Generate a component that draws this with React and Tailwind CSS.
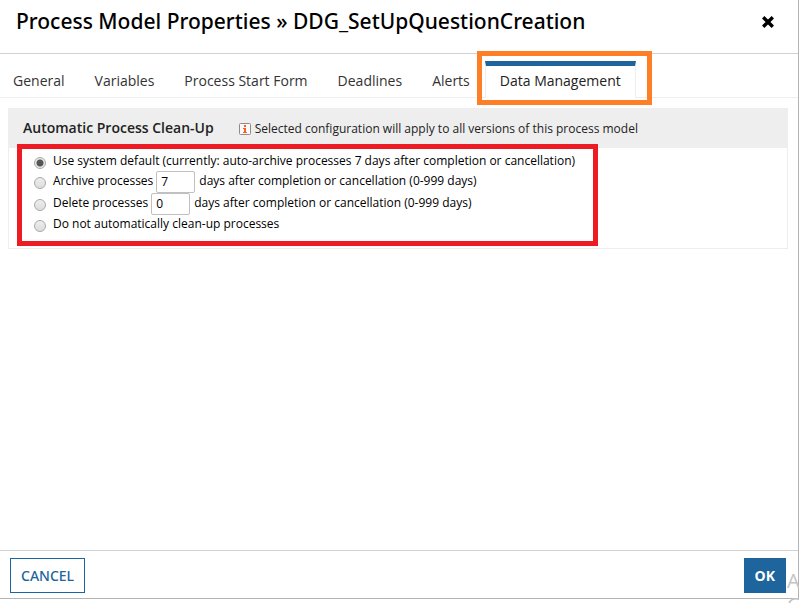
import React, { useState } from 'react';

const TABS = ['General', 'Variables', 'Process Start Form', 'Deadlines', 'Alerts', 'Data Management'];

const RADIO =
  'appearance-none size-3 shrink-0 mt-1 mr-[7px] rounded-full border border-[#a9a9a9] bg-linear-to-b from-[#eeeeee] to-[#dcdcdc] ' +
  'checked:bg-[radial-gradient(circle,#555_3px,#e8e8e8_4px)]';

function CloseIcon() {
  return (
    <svg viewBox="0 0 12 12" className="size-3" aria-hidden="true">
      <path d="M1.2 1.2 10.8 10.8M10.8 1.2 1.2 10.8" stroke="#000" strokeWidth="3.4" />
    </svg>
  );
}

function InfoIcon() {
  return (
    <svg viewBox="0 0 12 12" className="size-3 mr-1 shrink-0" aria-hidden="true">
      <rect x="0.5" y="0.5" width="11" height="11" rx="1" fill="#f8f8f8" stroke="#8c8c8c" />
      <rect x="5" y="2" width="2" height="2" fill="#ff5a22" />
      <path d="M4 5h3v4h1v1H4V9h1V6H4z" fill="#ff5a22" />
    </svg>
  );
}

function DaysOption({ id, label, mode, setMode, initial }) {
  const [days, setDays] = useState(initial);
  return (
    <div className="flex items-center h-[22px]">
      <input type="radio" name="cleanup" id={id} checked={mode === id} onChange={() => setMode(id)} className={RADIO} />
      <label htmlFor={id}>{label}</label>
      <input
        type="text"
        aria-label={`${label} after days`}
        value={days}
        onChange={(e) => setDays(e.target.value)}
        className="w-[39px] h-[22px] mt-px ml-[3px] mr-1 px-1 border border-[#c0c0c0] rounded-xs bg-white"
      />
      <span>days after completion or cancellation (0-999 days)</span>
    </div>
  );
}

function PlainOption({ id, label, mode, setMode }) {
  return (
    <div className="flex items-center h-[19px]">
      <input type="radio" name="cleanup" id={id} checked={mode === id} onChange={() => setMode(id)} className={RADIO} />
      <label htmlFor={id}>{label}</label>
    </div>
  );
}

export default function App() {
  const [tab, setTab] = useState('Data Management');
  const [mode, setMode] = useState('default');

  return (
    <div className="relative h-screen pb-1 overflow-hidden bg-white font-['Open_Sans',sans-serif] text-black">
      <div role="dialog" aria-labelledby="dialog-title" className="flex flex-col h-full bg-white border-r border-b border-[#b4b4b4]">
        <header className="flex items-center justify-between h-[54px] pl-4 pr-6 pb-2.5 border-b border-[#d2d2d2]">
          <h1 id="dialog-title" className="font-['Noto_Sans','Open_Sans',sans-serif] text-[21px] font-medium whitespace-nowrap">
            Process Model Properties » DDG_SetUpQuestionCreation
          </h1>
          <button type="button" aria-label="Close">
            <CloseIcon />
          </button>
        </header>

        <nav role="tablist" className="flex h-11 pt-[7px] -ml-0.5 border-b border-[#eeeeee]">
          {TABS.map((name) => (
            <div key={name} className="relative flex">
              <button
                type="button"
                role="tab"
                aria-selected={tab === name}
                onClick={() => setTab(name)}
                className={
                  tab === name
                    ? 'relative -mb-px px-3.5 bg-white border-x border-x-[#eeeeee] border-t-[5px] border-t-[#1d659c] pb-[3px] text-sm text-[#222] whitespace-nowrap'
                    : 'px-[15px] pb-[2px] pt-[5px] text-sm text-[#333] whitespace-nowrap'
                }
              >
                {name}
              </button>
              {name === 'Data Management' && (
                <div className="absolute z-10 -top-2.5 -bottom-2 -left-2 -right-4 border-[5px] border-[#ff7f27] pointer-events-none" />
              )}
            </div>
          ))}
        </nav>

        <main className="flex-1 pt-2.5 pl-2 pr-2.5">
          <section className="border border-[#eeeeee]">
            <div className="flex items-center h-[39px] pl-3.5 bg-[#eeeeee] text-[#222]">
              <h2 className="text-sm font-semibold mr-[25px] pb-px">Automatic Process Clean-Up</h2>
              <InfoIcon />
              <p className="text-xs">Selected configuration will apply to all versions of this process model</p>
            </div>
            <div className="relative h-[100px] pt-[3px] pl-[25px] text-xs">
              <PlainOption id="default" label="Use system default (currently: auto-archive processes 7 days after completion or cancellation)" mode={mode} setMode={setMode} />
              <DaysOption id="archive" label="Archive processes" initial="7" mode={mode} setMode={setMode} />
              <DaysOption id="delete" label="Delete processes" initial="0" mode={mode} setMode={setMode} />
              <PlainOption id="none" label="Do not automatically clean-up processes" mode={mode} setMode={setMode} />
              <div className="absolute -top-1 left-2 w-[581px] h-[102px] border-[5px] border-[#ed1c24] pointer-events-none" />
            </div>
          </section>
        </main>

        <footer className="flex items-center justify-between h-12 pl-2.5 pr-3 pt-px border-t border-[#d2d2d2] text-sm">
          <button type="button" className="h-[35px] px-2.5 pt-0.5 border border-[#1d659c] text-[#1d659c] font-['Noto_Sans','Open_Sans',sans-serif] font-medium">
            CANCEL
          </button>
          <button type="button" className="h-[35px] px-[11px] pt-0.5 bg-[#1d659c] text-white font-bold">
            OK
          </button>
        </footer>
      </div>

      <div className="absolute left-[787px] top-[569px] text-xl leading-6 text-[#c4c4c4] whitespace-nowrap pointer-events-none">
        <p>A</p>
        <p>G</p>
      </div>
    </div>
  );
}
